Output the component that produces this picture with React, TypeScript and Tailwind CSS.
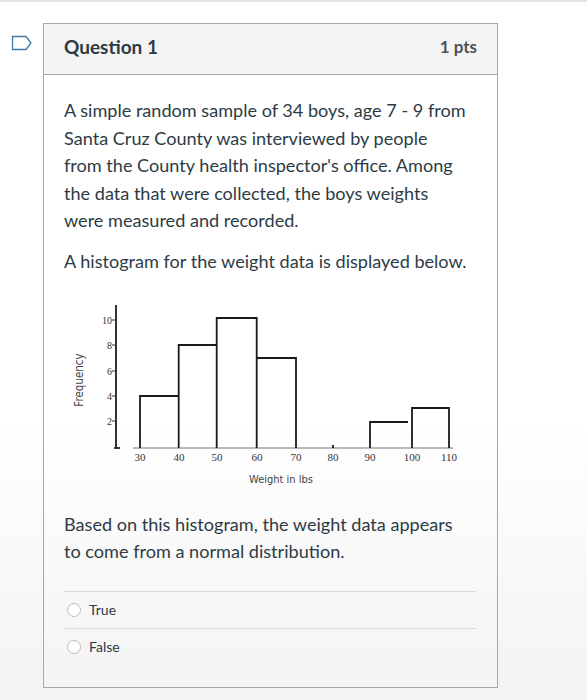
import React from "react";

function Histogram() {
  const ticksY = [
    { v: "10", y: 320 },
    { v: "8", y: 345 },
    { v: "6", y: 371 },
    { v: "4", y: 396 },
    { v: "2", y: 421 },
  ];
  const xs = [
    { v: "30", x: 140 },
    { v: "40", x: 179 },
    { v: "50", x: 217 },
    { v: "60", x: 257 },
    { v: "70", x: 296 },
    { v: "80", x: 333 },
    { v: "90", x: 370 },
    { v: "100", x: 412 },
    { v: "110", x: 449 },
  ];
  return (
    <svg width="420" height="200" viewBox="64 290 420 200" className="block">
      <line x1="116" y1="305" x2="116" y2="448" stroke="#333" strokeWidth="2" />
      <line x1="114" y1="448" x2="120" y2="448" stroke="#333" strokeWidth="2" />
      {ticksY.map((t) => (
        <g key={t.v}>
          <line x1="112" y1={t.y} x2="116" y2={t.y} stroke="#333" strokeWidth="1" />
          <text x="112" y={t.y + 3.5} textAnchor="end" fontSize="10" fontFamily="'Liberation Serif', serif" fill="#333">
            {t.v}
          </text>
        </g>
      ))}
      <line x1="133" y1="448" x2="453" y2="448" stroke="#777" strokeWidth="1.2" />
      <g fill="none" stroke="#1a1a1a" strokeWidth="1.8">
        <path d="M140 448 V396 H178.7" />
        <path d="M178.7 448 V345 H216.7" />
        <path d="M216.7 448 V318 H256.7 V448" />
        <path d="M256.7 358 H296 V448" />
        <path d="M370 448 V422 H408" />
        <path d="M412 448 V408 H449 V448" />
        <path d="M333 445 V448" />
      </g>
      {xs.map((t) => (
        <text key={t.v} x={t.x} y="461" textAnchor="middle" fontSize="11" fontFamily="'Liberation Serif', serif" fill="#333">
          {t.v}
        </text>
      ))}
      <text x="281" y="483" textAnchor="middle" fontSize="11" fontFamily="'DejaVu Sans Condensed', 'DejaVu Sans', sans-serif" fill="#444">
        Weight in lbs
      </text>
      <text
        x="0"
        y="0"
        transform="translate(83 380) rotate(-90)"
        textAnchor="middle"
        fontSize="11.5"
        fontFamily="'DejaVu Sans Condensed', 'DejaVu Sans', sans-serif"
        fill="#444"
      >
        Frequency
      </text>
    </svg>
  );
}

function Radio({ label }: { label: string }) {
  return (
    <div className="flex items-center h-[37px] border-t border-[#d9d9d9]">
      <span className="ml-[3px] w-[14px] h-[14px] rounded-full border border-[#bdbdbd] bg-white" />
      <span className="ml-[8px] text-[14px] text-[#2d3b45]">{label}</span>
    </div>
  );
}

export default function App() {
  return (
    <div
      className="w-[587px] h-[700px] bg-gradient-to-b from-white from-60% to-[#f3f3f3] relative"
      style={{ fontFamily: "Lato, 'Noto Sans', sans-serif" }}
    >
      <div className="h-[2px] bg-[#e3e3e3]" />
      <div className="flex pt-[21px]">
        <div className="w-[43px] flex justify-center pt-[12px]">
          <svg width="22" height="16" viewBox="0 0 22 16">
            <path d="M1.5 1.5 H15 L20 8 L15 14.5 H1.5 Z" fill="none" stroke="#3e7aa8" strokeWidth="1.3" />
          </svg>
        </div>
        <div className="w-[455px] h-[665px] border border-[#a8a8a8] text-[#2d3b45]">
          <div className="h-[51px] bg-[#f4f4f4] border-b border-[#a8a8a8] flex items-center justify-between px-[20px] pb-[4px]">
            <span className="text-[19px] font-bold">Question 1</span>
            <span className="text-[17px] font-bold text-[#4a5257]">1 pts</span>
          </div>
          <div className="pl-[20px] pt-[22px]">
            <div className="pr-[29px]">
              <p className="text-[18.1px] leading-[27.6px]">
                A simple random sample of 34 boys, age 7 - 9 from Santa Cruz County was interviewed by people from the County health inspector's office. Among the data that were collected, the boys weights were measured and recorded.
              </p>
              <p className="text-[18.1px] leading-[27.6px] mt-[13px]">A histogram for the weight data is displayed below.</p>
            </div>
            <div className="mt-[14px]">
              <Histogram />
            </div>
            <p className="text-[18.1px] leading-[27.6px] mt-[21px] pr-[29px]">
              Based on this histogram, the weight data appears to come from a normal distribution.
            </p>
            <div className="mt-[25px] mr-[21px]">
              <Radio label="True" />
              <Radio label="False" />
            </div>
          </div>
        </div>
      </div>
    </div>
  );
}
